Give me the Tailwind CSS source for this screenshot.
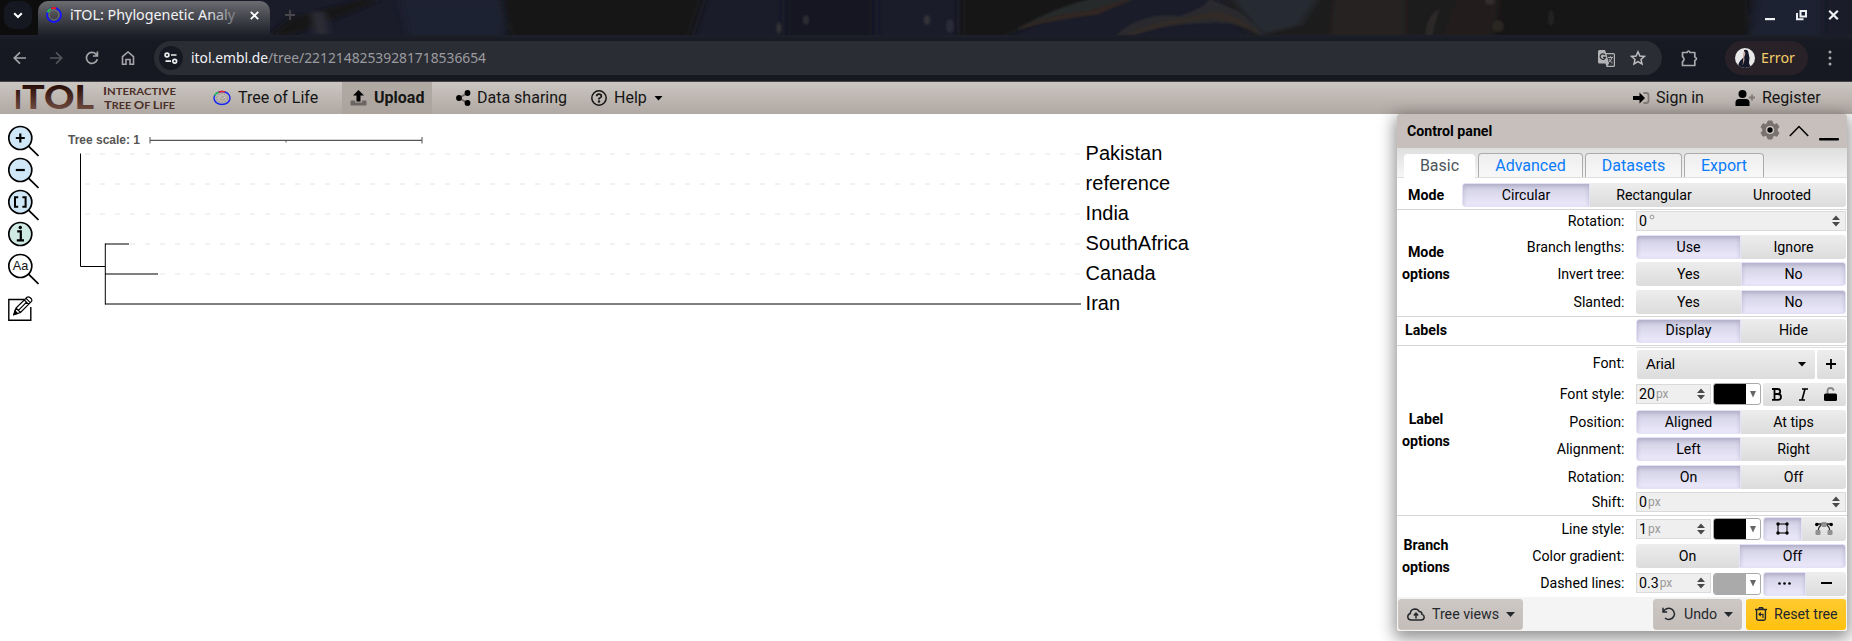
<!DOCTYPE html>
<html lang="en">
<head>
<meta charset="utf-8">
<title>iTOL: Phylogenetic Analysis</title>
<script src="https://cdn.jsdelivr.net/npm/@tailwindcss/browser@4"></script>
</head>
<body class="w-[1852px] h-[641px] overflow-hidden bg-white flex flex-col font-['Roboto',sans-serif] text-black">

<!-- Tab strip -->
<header class="relative h-[35px] w-full shrink-0 bg-[#17171d] overflow-hidden">
  <svg class="absolute inset-0" width="1852" height="35" viewBox="0 0 1852 35">
    <defs><filter id="soft" x="-10%" y="-50%" width="120%" height="200%"><feGaussianBlur stdDeviation="4 1.5"/></filter><filter id="soft2"><feGaussianBlur stdDeviation=".8"/></filter></defs>
    <rect width="1852" height="35" fill="#1b1c2a"/>
    <g filter="url(#soft)">
      <rect x="-20" y="-10" width="75" height="60" fill="#0d0d0e"/>
      <path d="M270 35 290 18 360 0 380 0 345 15 290 35Z" fill="#121217"/>
      <path d="M400 0h110l-10 40h-90z" fill="#1e2030"/>
      <path d="M500-5H705L690 40H510Z" fill="#121313"/>
      <path d="M785-5h90v45h-90z" fill="#181624"/>
      <path d="M960-5H1110L1020 30 1000 40H960Z" fill="#141518"/>
      <path d="M1310-5H1640V40H1255L1220 0Z" fill="#1c1b1b"/>
      <path d="M1335-5h70v45h-75z" fill="#252120"/>
      <path d="M1460-5h45l-15 45h-50z" fill="#241e1d"/>
      <path d="M1500-5h250v45h-255z" fill="#131314"/>
      <path d="M1760-5h60v45h-72z" fill="#1f2432"/>
      <path d="M1230-5h90l-20 30-40 10z" fill="#282b30"/>
      <path d="M312 12h12l4 22h-12z" fill="#2d2d38"/>
    </g>
    <g filter="url(#soft2)">
      <path d="M1018 28Q1060 5 1095-2H1135Q1090 17 1060 20Q1035 25 1018 30Z" fill="#28292c"/>
      <path d="M1022 26Q1060 13 1088 11L1128-1H1134L1096 15Q1050 19 1022 29Z" fill="#302820"/>
      <path d="M1115 36Q1140 12 1180 16Q1205 8 1210-1L1240 12Q1250 20 1265 36Q1235 20 1208 23Q1160 24 1132 36Z" fill="#2b2c2f"/>
      <path d="M1125 36Q1150 22 1185 18L1215 11Q1240 15 1262 36Q1235 22 1212 18Q1160 26 1132 36Z" fill="#302a28"/>
      <path d="M1425 36q2-22 15-28q-5 14-8 28z" fill="#302d2d" opacity=".8"/>
      <ellipse cx="806" cy="20" rx="3" ry="5" fill="#2c2d33"/>
      <ellipse cx="779" cy="28" rx="2.5" ry="6" fill="#303036"/>
      <ellipse cx="927" cy="20" rx="3.500" ry="5" fill="#303138"/>
      <ellipse cx="950" cy="26" rx="4" ry="7" fill="#292a38"/>
      <ellipse cx="1551" cy="18" rx="3" ry="8" fill="#222324"/>
      <ellipse cx="1490" cy="1" rx="5" ry="4" fill="#312e2d"/>
      <ellipse cx="1498" cy="26" rx="6" ry="6" fill="#2a2524"/>
    </g>
  </svg>
  <div class="absolute left-[4px] top-[1px] w-7 h-7 rounded-[10px] bg-[#151821] flex items-center justify-center">
    <svg width="10" height="7" viewBox="0 0 10 7" fill="none" stroke="#fff" stroke-width="2"><path d="M1.200 1.200 5 5 8.800 1.200"/></svg>
  </div>
  <div class="absolute left-[38px] top-[1px] w-[232px] h-[34px] rounded-t-[10px] bg-linear-to-b from-[#6c6d71] to-[#1e2029]"></div>
  <div class="absolute left-[46px] top-0 w-[224px] h-[30px] flex items-center">
    <svg width="16" height="16" viewBox="0 0 16 16" fill="none" stroke-width="1.800">
      <circle cx="8" cy="8" r="7" stroke="#1515ff"/>
      <path d="M5 1.700A7 7 0 0 1 10 1.300" stroke="#f01818"/><path d="M1.600 5.300A7 7 0 0 1 5 1.700" stroke="#1fd838"/>
      <circle cx="8" cy="8" r="5" stroke="#77787b" stroke-width="1"/>
    </svg>
    <svg class="ml-2 overflow-visible" width="166" height="22"><defs><linearGradient id="fade" gradientUnits="userSpaceOnUse" x1="0" y1="0" x2="170" y2="0"><stop offset=".8" stop-color="#f3f3f5"/><stop offset="1" stop-color="#f3f3f5" stop-opacity=".15"/></linearGradient></defs><text x="0" y="16" fill="url(#fade)" font-family="Noto Sans" font-size="14.500" textLength="165" lengthAdjust="spacingAndGlyphs">iTOL: Phylogenetic Analy</text></svg>
    <svg class="ml-[14px]" width="9" height="9" viewBox="0 0 9 9" stroke="#fff" stroke-width="1.800"><path d="M.8.8 8.200 8.200M8.200.8.800 8.200"/></svg>
  </div>
  <svg class="absolute left-[285px] top-[10px]" width="10" height="10" stroke="#47474c" stroke-width="1.800"><path d="M5 0V10M0 5H10"/></svg>
  <div class="absolute right-[13px] top-[9px] flex items-center gap-[21px]">
    <svg width="11" height="12"><rect x="1" y="9" width="10" height="2.200" fill="#eff0f3"/></svg>
    <svg width="11" height="12" fill="none" stroke="#eff0f3" stroke-width="2"><path d="M4.500 2H10V7.500H4.500ZM1 4V10.200H7.500"/></svg>
    <svg width="11" height="12" stroke="#eff0f3" stroke-width="2.200"><path d="M1.200 1.700 9.800 10.300M9.800 1.700 1.200 10.300"/></svg>
  </div>
</header>

<!-- Browser toolbar -->
<div class="h-[46px] shrink-0 w-full bg-linear-to-b from-[#1d1f29] to-[#161822] to-15% flex items-center">
  <div class="flex items-center ml-[13px] gap-[22px] w-[141px]">
    <svg width="14" height="14" viewBox="0 0 14 14" fill="none" stroke="#a5a5a9" stroke-width="1.700"><path d="M13 7H1.500M7 1.300 1.300 7 7 12.700"/></svg>
    <svg width="14" height="14" viewBox="0 0 14 14" fill="none" stroke="#54555c" stroke-width="1.700"><path d="M1 7H12.500M7 1.300 12.700 7 7 12.700"/></svg>
    <svg width="14" height="14" viewBox="0 0 14 14" fill="none" stroke="#a5a5a9" stroke-width="1.700"><path d="M12.300 8.200A5.500 5.500 0 1 1 10.900 3.100L12.300 4.600M12.400.5V5H7.900"/></svg>
    <svg width="14" height="14" viewBox="0 0 14 14" fill="none" stroke="#a5a5a9" stroke-width="1.600"><path d="M1.500 5.600 7 1 12.500 5.600V13.200H9V8.500H5V13.200H1.500Z"/></svg>
  </div>
  <div class="w-[1508px] h-[34px] rounded-full bg-[#2b2d34] flex items-center">
    <div class="ml-[5px] w-6 h-6 rounded-full bg-[#161822] flex items-center justify-center">
      <svg width="14" height="12" viewBox="0 0 14 12" fill="none" stroke="#eee" stroke-width="1.700"><circle cx="3" cy="3" r="1.900"/><path d="M7 3H12.500M1.500 9.200H7"/><circle cx="10.700" cy="9.200" r="1.900"/></svg>
    </div>
    <svg class="ml-2 overflow-visible" width="320" height="24"><text x="0" y="17" fill="#9b9ca0" font-family="Noto Sans" font-size="14.500" textLength="295" lengthAdjust="spacingAndGlyphs"><tspan fill="#f2f2f4">itol.embl.de</tspan>/tree/22121482539281718536654</text></svg>
    <div class="ml-auto mr-[16px] flex items-center gap-[15px]">
      <svg width="17" height="17" viewBox="0 0 17 17"><path d="M1.500 0H7L8 3H15.500A1.500 1.500 0 0 1 17 4.500V15.500A1.500 1.500 0 0 1 15.500 17H8.500L7.500 13.500H1.500A1.500 1.500 0 0 1 0 12V1.500A1.500 1.500 0 0 1 1.500 0Z" fill="#b3b3b6"/><path d="M8.500 4.200H15.800V15.800H9.500L11 13.500Z" fill="#33353b"/><path d="M10 7.500H15M12.500 6.300V7.500M14 7.500Q13 11 10.500 12.500M11 9Q12.500 12 14.500 13" fill="none" stroke="#b3b3b6" stroke-width="1"/><path d="M7 5A2.700 2.700 0 1 0 7.500 7.300H5" fill="none" stroke="#2b2d34" stroke-width="1.200"/></svg>
      <svg width="16" height="16" viewBox="0 0 16 16" fill="none" stroke="#bdbdc0" stroke-width="1.500"><path d="M8 1.800 9.900 6 14.400 6.400 11 9.400 12 13.900 8 11.500 4 13.900 5 9.400 1.600 6.400 6.100 6Z"/></svg>
    </div>
  </div>
  <svg class="ml-[19px]" width="17" height="17" viewBox="0 0 17 17" fill="none" stroke="#aaaaae" stroke-width="1.700"><path d="M1.500 2.500H6Q7.500-.5 9 2.500H13.800V7Q17.200 8.700 13.800 10.400V15.500H1.500V11.800Q4.500 9.200 1.500 6.500Z" stroke-linejoin="round"/></svg>
  <div class="ml-[27px] w-[83px] h-[34px] rounded-full bg-[#282228] flex items-center">
    <svg class="ml-[10px]" width="20" height="20" viewBox="0 0 20 20"><defs><clipPath id="av"><circle cx="10" cy="10" r="10"/></clipPath></defs><g clip-path="url(#av)"><rect width="20" height="20" fill="#e9e8e8"/><path d="M9 2Q13 .5 13.500 5L14.500 10 14 15 16 20H3Q3 14 7 11L9.500 8Z" fill="#141829"/><path d="M8.700 3.500Q10.500 3 10.300 6L9.200 8.500 9.500 12 7.500 18 8.300 11 8 7Z" fill="#c9a79c"/></g></svg>
    <svg class="ml-[6px] overflow-visible" width="36" height="24"><text x="0" y="17" fill="#f3cd69" font-family="Noto Sans" font-size="14" textLength="34" lengthAdjust="spacingAndGlyphs">Error</text></svg>
  </div>
  <svg class="ml-[20px]" width="4" height="16" fill="#a9a9ad"><circle cx="2" cy="2" r="1.500"/><circle cx="2" cy="8" r="1.500"/><circle cx="2" cy="14" r="1.500"/></svg>
</div>

<!-- Site navigation -->
<nav class="h-[33px] shrink-0 w-full border-t border-[#454347] bg-linear-to-b from-[#cbc6c2] to-[#b0a8a2] flex items-center text-[16px] text-[#151515]">
  <svg class="ml-[14px] overflow-visible" width="164" height="32" viewBox="0 0 164 32">
    <defs><linearGradient id="lg" gradientUnits="userSpaceOnUse" x1="0" y1="4" x2="0" y2="28"><stop offset="0" stop-color="#2b0f0a"/><stop offset="1" stop-color="#704c40"/></linearGradient></defs>
    <g fill="url(#lg)" font-family="Lato" font-weight="900">
      <text x="0" y="26.500" font-size="26" textLength="8" lengthAdjust="spacingAndGlyphs">I</text>
      <text x="8" y="26.500" font-size="31.500" textLength="72" lengthAdjust="spacingAndGlyphs">TOL</text>
    </g>
    <g fill="#4b2f28" font-family="Lato" font-weight="700">
      <text x="89" y="13" font-size="10.500" textLength="73" lengthAdjust="spacingAndGlyphs">I<tspan font-size="8.800">NTERACTIVE</tspan></text>
      <text x="90" y="27" font-size="10.500" textLength="71" lengthAdjust="spacingAndGlyphs">T<tspan font-size="8.800">REE </tspan>O<tspan font-size="8.800">F </tspan>L<tspan font-size="8.800">IFE</tspan></text>
    </g>
  </svg>
  <svg class="ml-[35px]" width="18" height="16" viewBox="0 0 18 16" fill="none" stroke-width="1.500">
    <ellipse cx="9" cy="8" rx="8" ry="6.500" stroke="#1a28f0"/><path d="M5.500 2.100A8 6.500 0 0 1 12 1.900" stroke="#f02020"/><path d="M1.500 5.500A8 6.500 0 0 1 5.500 2.100" stroke="#22d83a"/>
    <ellipse cx="9" cy="8" rx="5.300" ry="4.300" stroke="#98928e" stroke-width="1" stroke-dasharray="2 1"/><path d="M7 9Q9 11 12 9M8 7H11" stroke="#98928e" stroke-width=".8"/>
  </svg>
  <span class="ml-[7px] w-[80px] whitespace-nowrap">Tree of Life</span>
  <div class="ml-[24px] w-[90px] h-full bg-linear-to-b from-[#b1aaa4] to-[#aba39c] flex items-center">
    <svg class="ml-2" width="17" height="16" viewBox="0 0 17 16"><path d="M1.500 10.500H5V12.500H12V10.500H15.500Q16.500 10.500 16.500 11.500V14.500Q16.500 15.500 15.500 15.500H1.500Q.5 15.500.5 14.500V11.500Q.5 10.500 1.500 10.500Z" fill="#6b6562"/><path d="M8.500 0 14 5.500H10.500V11.500H6.500V5.500H3Z"/></svg>
    <span class="ml-[7px] font-bold">Upload</span>
  </div>
  <svg class="ml-[24px]" width="15" height="16" viewBox="0 0 15 16"><path d="M11.500 3 3 8 11.500 13" fill="none" stroke="#6b6562" stroke-width="1.600"/><circle cx="11.500" cy="3" r="2.900"/><circle cx="3" cy="8" r="2.900"/><circle cx="11.500" cy="13" r="2.900"/></svg>
  <span class="ml-[6px] w-[90px] whitespace-nowrap">Data sharing</span>
  <svg class="ml-[24px]" width="16" height="16" viewBox="0 0 16 16" fill="none" stroke="#151515" stroke-width="1.500"><circle cx="8" cy="8" r="7.200"/><path d="M5.700 6.200Q5.700 4.200 8 4.200T10.400 6.200Q10.400 7.300 8 8.400V9.500" stroke-width="1.700"/><circle cx="8" cy="11.500" r=".5"/></svg>
  <span class="ml-[7px] w-[33px]">Help</span>
  <svg class="ml-[7px]" width="9" height="5"><path d="M.5 0H8.500L4.500 4.500Z"/></svg>
  <div class="ml-auto mr-[30px] flex items-center">
    <svg width="17" height="16" viewBox="0 0 17 16"><path d="M10.500 3H13Q15.500 3 15.500 5V11Q15.500 13 13 13H10.500" fill="none" stroke="#807a76" stroke-width="1.800"/><path d="M6.500 2.500 12 8 6.500 13.500V10H0V6H6.500Z"/></svg>
    <span class="ml-[6px] w-[49px] whitespace-nowrap">Sign in</span>
    <svg class="ml-[30px]" width="21" height="16" viewBox="0 0 21 16"><circle cx="7.500" cy="4" r="4"/><path d="M.5 16V12.500Q.5 9 4 9H11Q14.500 9 14.500 12.500V16Z"/><path d="M17 4.500V10.500M14 7.500H20" stroke="#807a76" stroke-width="1.800"/></svg>
    <span class="ml-[6px] w-[60px]">Register</span>
  </div>
</nav>

<!-- Workspace -->
<main class="relative h-[527px] w-full flex">
  <svg class="absolute left-0 top-0" width="1397" height="527" viewBox="0 114 1397 527">
    <g stroke="#555" stroke-width="1" fill="none"><path d="M150 140.300H422" stroke-width="1.200"/><path d="M150 137V143.500M422 137V143.500M286 140V142.500"/></g>
    <text x="68" y="144" font-family="Liberation Sans" font-weight="700" font-size="12" fill="#555" textLength="72">Tree scale: 1</text>
    <g stroke="#e4e4e4" stroke-width="1" stroke-dasharray="5 10"><path d="M85 154H1080M85 184H1080M85 214H1080M130 244H1080M160 274H1080"/></g>
    <g stroke="#000" stroke-width="1" fill="none"><path d="M80.500 153.500V266.500H105"/><path d="M105.300 243.500V304.500"/><path d="M105 244H129M105 274H158M105 304H1081"/></g>
    <g font-family="Liberation Sans" font-size="20" fill="#000">
      <text x="1085.600" y="160">Pakistan</text><text x="1085.600" y="190">reference</text><text x="1085.600" y="220">India</text>
      <text x="1085.600" y="250">SouthAfrica</text><text x="1085.600" y="280">Canada</text><text x="1085.600" y="310">Iran</text>
    </g>
  </svg>

  <aside class="ml-[7px] mt-[11px] flex flex-col w-8">
    <svg width="32" height="32" viewBox="0 0 32 32" fill="none" stroke="#000" stroke-width="1.700"><circle cx="13.300" cy="13" r="11.500" fill="#d0e7f8"/><path d="M21.500 21.200 31.500 31"/><path d="M13.300 8.500V17.500M8.800 13H17.800" stroke-width="2.200"/></svg>
    <svg width="32" height="32" viewBox="0 0 32 32" fill="none" stroke="#000" stroke-width="1.700"><circle cx="13.300" cy="13" r="11.500" fill="#d0e7f8"/><path d="M21.500 21.200 31.500 31"/><path d="M8.800 13H17.800" stroke-width="2.200"/></svg>
    <svg width="32" height="32" viewBox="0 0 32 32" fill="none" stroke="#000" stroke-width="1.700"><circle cx="13.300" cy="13" r="11.500" fill="#d0e7f8"/><path d="M21.500 21.200 31.500 31"/><path d="M11.200 8.300H8V17.700H11.200M15.400 8.300H18.600V17.700H15.400" stroke-width="2"/></svg>
    <svg width="32" height="32" viewBox="0 0 32 32" fill="none" stroke="#000" stroke-width="1.700"><circle cx="13.300" cy="13" r="11.500" fill="#cfe9e3"/><path d="M10.200 10.300H13.800V19M9.800 19.300H17" stroke-width="2.200"/><circle cx="13.300" cy="6.500" r="1.700" fill="#000" stroke="none"/></svg>
    <svg width="32" height="32" viewBox="0 0 32 32" fill="none" stroke="#000" stroke-width="1.700"><circle cx="13.300" cy="13" r="11.500" fill="#fff"/><path d="M21.500 21.200 31.500 31"/><text x="5.800" y="17" font-family="Liberation Sans" font-size="13" fill="#111" stroke="none" textLength="15.500" lengthAdjust="spacingAndGlyphs">Aa</text></svg>
    <svg class="mt-[10px]" width="32" height="28" viewBox="0 0 32 28" fill="none" stroke="#000" stroke-width="1.400"><path d="M17 4.500H1.800V25.300H23.800V12"/><path d="M7 19.500 9 13 20 2.300Q21.300 1.300 23 2.500L24.500 4Q25.500 5.500 24.300 6.700L13.500 17.500ZM9 13 13.500 17.500M17.300 5 21.600 9.300M19 3.300 23.300 7.600M11.500 15.300 19.500 7.200" stroke-width="1.200"/><path d="M7 19.500 8 16 10.300 18.500Z" fill="#000"/></svg>
  </aside>

  <!-- Control panel -->
  <section class="ml-auto mr-[5px] w-[450px] h-[517px] bg-white rounded-[3px] shadow-[0_5px_16px_3px_rgba(0,0,0,0.42)] relative flex flex-col leading-[18px]">
    <div class="h-[34px] shrink-0 bg-[#c6bfbc] rounded-t-[3px] flex items-center pl-[10px] pr-[8px] font-bold text-[14.200px]">
      Control panel
      <svg class="ml-auto -mt-[2px]" width="20" height="20" viewBox="0 0 20 20"><path d="M8 1H12L12.700 3.500 14.500 4.500 17 3.800 19 7.200 17.200 9V11L19 12.800 17 16.200 14.500 15.500 12.700 16.500 12 19H8L7.300 16.500 5.500 15.500 3 16.200 1 12.800 2.800 11V9L1 7.200 3 3.800 5.500 4.500 7.300 3.500Z" fill="#79736f" stroke="#79736f" stroke-linejoin="round"/><circle cx="10" cy="10" r="4" fill="#d3cdc9"/><circle cx="10" cy="10" r="2.700"/></svg>
      <svg class="ml-[9px]" width="20" height="12" fill="none" stroke="#000" stroke-width="1.500"><path d="M.8 11 10 1.500 19.200 11"/></svg>
      <svg class="ml-[10px] mt-[17px]" width="20" height="3"><rect width="20" height="2.500" rx="1"/></svg>
    </div>
    <div class="h-[30px] shrink-0 bg-linear-to-b from-[#dedede] to-[#f7f7f7] border-b border-[#dedede] flex items-end pl-[7px] text-[16px] text-[#0a7cfa]">
      <div class="w-[71px] h-[24px] -mb-px bg-white rounded-t text-[#4c545b] flex items-center justify-center">Basic</div>
      <div class="ml-[3px] w-[105px] h-[24px] bg-linear-to-b from-[#eeeeee] to-[#f8f8f8] border border-b-0 border-[#ababab] rounded-t flex items-center justify-center">Advanced</div>
      <div class="ml-[2px] w-[97px] h-[24px] bg-linear-to-b from-[#eeeeee] to-[#f8f8f8] border border-b-0 border-[#ababab] rounded-t flex items-center justify-center">Datasets</div>
      <div class="ml-[2px] w-[80px] h-[24px] bg-linear-to-b from-[#eeeeee] to-[#f8f8f8] border border-b-0 border-[#ababab] rounded-t flex items-center justify-center">Export</div>
    </div>

    <div class="h-[32px] shrink-0 border-b border-[#d6d6d6] flex items-center pt-[2px] text-[14.200px]">
      <b class="w-[65px] pl-[11px]">Mode</b>
      <div class="w-[384px] h-[24px] flex">
        <div class="w-[128px] rounded-l-[3px] border border-[#e4e2f6] bg-linear-to-b from-[#cfcde1] to-[#eceafb] shadow-[inset_0_2px_4px_rgba(70,65,110,0.25)] flex items-center justify-center">Circular</div>
        <div class="w-[128px] bg-linear-to-b from-[#ededed] to-[#dcdcdc] flex items-center justify-center">Rectangular</div>
        <div class="w-[128px] rounded-r-[3px] bg-linear-to-b from-[#ededed] to-[#dcdcdc] flex items-center justify-center">Unrooted</div>
      </div>
    </div>

    <div class="h-[107px] shrink-0 border-b border-[#d6d6d6] flex text-[14.200px]">
      <b class="w-[58px] pt-[32px] text-center leading-[21.500px]">Mode options</b>
      <div class="w-[391px] flex flex-col pt-px">
        <div class="h-[20px] flex items-center"><span class="w-[169.500px] text-right">Rotation:</span>
          <div class="ml-auto w-[210px] h-[20px] border border-[#dadada] bg-[#efefef] flex items-center pl-[2px] pr-[5px]">0<svg class="ml-[2px] -mt-[9px]" width="6" height="6" fill="none" stroke="#999"><circle cx="3" cy="3" r="1.900"/></svg><svg class="ml-auto" width="8" height="12" fill="#4a4a4a"><path d="M0 5 4 .5 8 5ZM0 7H8L4 11.500Z"/></svg></div></div>
        <div class="mt-[4px] h-[24px] flex items-center"><span class="w-[169.500px] text-right">Branch lengths:</span>
          <div class="ml-auto w-[210px] h-full flex"><div class="w-[105px] rounded-l-[3px] border border-[#e4e2f6] bg-linear-to-b from-[#cfcde1] to-[#eceafb] shadow-[inset_0_2px_4px_rgba(70,65,110,0.25)] flex items-center justify-center">Use</div><div class="w-[105px] rounded-r-[3px] bg-linear-to-b from-[#ededed] to-[#dcdcdc] flex items-center justify-center">Ignore</div></div></div>
        <div class="mt-[3px] h-[24px] flex items-center"><span class="w-[169.500px] text-right">Invert tree:</span>
          <div class="ml-auto w-[210px] h-full flex"><div class="w-[105px] rounded-l-[3px] bg-linear-to-b from-[#ededed] to-[#dcdcdc] flex items-center justify-center">Yes</div><div class="w-[105px] rounded-r-[3px] border border-[#e4e2f6] bg-linear-to-b from-[#cfcde1] to-[#eceafb] shadow-[inset_0_2px_4px_rgba(70,65,110,0.25)] flex items-center justify-center">No</div></div></div>
        <div class="mt-[4px] h-[24px] flex items-center"><span class="w-[169.500px] text-right">Slanted:</span>
          <div class="ml-auto w-[210px] h-full flex"><div class="w-[105px] rounded-l-[3px] bg-linear-to-b from-[#ededed] to-[#dcdcdc] flex items-center justify-center">Yes</div><div class="w-[105px] rounded-r-[3px] border border-[#e4e2f6] bg-linear-to-b from-[#cfcde1] to-[#eceafb] shadow-[inset_0_2px_4px_rgba(70,65,110,0.25)] flex items-center justify-center">No</div></div></div>
      </div>
    </div>

    <div class="h-[29px] shrink-0 border-b border-[#d6d6d6] flex items-center text-[14.200px] pr-px">
      <b class="pl-[8px] -mt-[2px]">Labels</b>
      <div class="ml-auto w-[210px] h-[24px] flex -mt-px"><div class="w-[105px] pb-px rounded-l-[3px] border border-[#e4e2f6] bg-linear-to-b from-[#cfcde1] to-[#eceafb] shadow-[inset_0_2px_4px_rgba(70,65,110,0.25)] flex items-center justify-center">Display</div><div class="w-[105px] pb-px rounded-r-[3px] bg-linear-to-b from-[#ededed] to-[#dcdcdc] flex items-center justify-center">Hide</div></div>
    </div>

    <div class="h-[170px] shrink-0 border-b border-[#d6d6d6] flex text-[14.200px]">
      <b class="w-[58px] pt-[63px] text-center leading-[21.500px]">Label options</b>
      <div class="w-[391px] flex flex-col">
        <div class="mt-px ml-auto w-[210px] border-t border-[#dcdcdc]"></div>
        <div class="mt-[2px] h-[29px] flex items-center"><span class="w-[169.500px] text-right -mt-[3px]">Font:</span>
          <div class="ml-auto w-[209px] h-full flex gap-[2px]"><div class="w-[178px] rounded-[2px] bg-linear-to-b from-[#ededed] to-[#dcdcdc] flex items-center px-[9px] pb-px font-['Liberation_Sans'] text-[14.500px]">Arial<svg class="ml-auto" width="8" height="5"><path d="M0 0H8L4 4.500Z"/></svg></div><div class="w-[28px] rounded-[2px] bg-linear-to-b from-[#ededed] to-[#dcdcdc] flex items-center justify-center pb-[2px]"><svg width="10" height="10" stroke="#000" stroke-width="1.800"><path d="M5 0V10M0 5H10"/></svg></div></div></div>
        <div class="mt-[4px] h-[24px] flex items-center"><span class="w-[169.500px] text-right -mt-[3px]">Font style:</span>
          <div class="ml-auto w-[210px] h-full flex items-center">
            <div class="-mt-[3px] w-[75px] h-[20px] border border-[#dadada] bg-[#efefef] flex items-center pl-[2px] pr-[5px]">20<span class="text-[12px] text-[#999] ml-[1px]">px</span><svg class="ml-auto" width="8" height="12" fill="#4a4a4a"><path d="M0 5 4 .5 8 5ZM0 7H8L4 11.500Z"/></svg></div>
            <div class="-mt-[2px] ml-[2px] w-[48px] h-[22px] border border-[#aaa] rounded-[3px] bg-white flex overflow-hidden"><div class="w-[32px] bg-black"></div><svg class="m-auto" width="6" height="7" fill="#666"><path d="M0 0H6L3 6.500Z"/></svg></div>
            <div class="-mt-px ml-[2px] w-[83px] h-[23px] rounded-[2px] bg-linear-to-b from-[#ededed] to-[#dcdcdc] flex items-center justify-between pl-[9px] pr-[9px] pb-px">
              <svg width="10" height="13" viewBox="0 0 10 13" fill="none" stroke="#000" stroke-width="1.800"><path d="M0 1H5.500Q8.200 1 8.200 3.500T5.500 6H2.500M2.500 1V11.800M0 11.800H6Q9 11.800 9 9T6 6"/></svg>
              <svg width="9" height="13" viewBox="0 0 9 13" fill="none" stroke="#000" stroke-width="1.600"><path d="M3 1H9M0 12H6M6 1 3 12"/></svg>
              <svg width="13" height="14" viewBox="0 0 13 14"><path d="M3.500 7V3.800Q3.500 1 6.500 1T9.500 3.800" fill="none" stroke="#888" stroke-width="1.800"/><rect y="6.500" width="13" height="7.500" rx="1.500"/></svg>
            </div></div></div>
        <div class="mt-[3px] h-[24px] flex items-center"><span class="w-[169.500px] text-right">Position:</span>
          <div class="ml-auto w-[210px] h-full flex"><div class="w-[105px] rounded-l-[3px] border border-[#e4e2f6] bg-linear-to-b from-[#cfcde1] to-[#eceafb] shadow-[inset_0_2px_4px_rgba(70,65,110,0.25)] flex items-center justify-center">Aligned</div><div class="w-[105px] rounded-r-[3px] bg-linear-to-b from-[#ededed] to-[#dcdcdc] flex items-center justify-center">At tips</div></div></div>
        <div class="mt-[3px] h-[24px] flex items-center"><span class="w-[169.500px] text-right">Alignment:</span>
          <div class="ml-auto w-[210px] h-full flex"><div class="w-[105px] rounded-l-[3px] border border-[#e4e2f6] bg-linear-to-b from-[#cfcde1] to-[#eceafb] shadow-[inset_0_2px_4px_rgba(70,65,110,0.25)] flex items-center justify-center">Left</div><div class="w-[105px] rounded-r-[3px] bg-linear-to-b from-[#ededed] to-[#dcdcdc] flex items-center justify-center">Right</div></div></div>
        <div class="mt-[4px] h-[24px] flex items-center"><span class="w-[169.500px] text-right">Rotation:</span>
          <div class="ml-auto w-[210px] h-full flex"><div class="w-[105px] rounded-l-[3px] border border-[#e4e2f6] bg-linear-to-b from-[#cfcde1] to-[#eceafb] shadow-[inset_0_2px_4px_rgba(70,65,110,0.25)] flex items-center justify-center">On</div><div class="w-[105px] rounded-r-[3px] bg-linear-to-b from-[#ededed] to-[#dcdcdc] flex items-center justify-center">Off</div></div></div>
        <div class="mt-[3px] h-[20px] flex items-center"><span class="w-[169.500px] text-right">Shift:</span>
          <div class="ml-auto w-[210px] h-[20px] border border-[#dadada] bg-[#efefef] flex items-center pl-[2px] pr-[5px]">0<span class="text-[12px] text-[#999] ml-[1px]">px</span><svg class="ml-auto" width="8" height="12" fill="#4a4a4a"><path d="M0 5 4 .5 8 5ZM0 7H8L4 11.500Z"/></svg></div></div>
      </div>
    </div>

    <div class="h-[81px] shrink-0 flex text-[14.200px]">
      <b class="w-[58px] pt-[18px] text-center leading-[22px]">Branch options</b>
      <div class="w-[391px] flex flex-col">
        <div class="mt-px h-[24px] flex items-center"><span class="w-[169.500px] text-right -mt-px">Line style:</span>
          <div class="ml-auto w-[210px] h-full flex items-center">
            <div class="-mt-px w-[75px] h-[20px] border border-[#dadada] bg-[#efefef] flex items-center pl-[2px] pr-[5px]">1<span class="text-[12px] text-[#999] ml-[1px]">px</span><svg class="ml-auto" width="8" height="12" fill="#4a4a4a"><path d="M0 5 4 .5 8 5ZM0 7H8L4 11.500Z"/></svg></div>
            <div class="ml-[2px] w-[48px] h-[22px] border border-[#aaa] rounded-[3px] bg-white flex overflow-hidden"><div class="w-[32px] bg-black"></div><svg class="m-auto" width="6" height="7" fill="#666"><path d="M0 0H6L3 6.500Z"/></svg></div>
            <div class="ml-[2px] w-[83px] h-full flex">
              <div class="w-[39px] pb-px rounded-l-[3px] border border-[#e4e2f6] bg-linear-to-b from-[#cfcde1] to-[#eceafb] shadow-[inset_0_2px_4px_rgba(70,65,110,0.25)] flex items-center justify-center"><svg width="13" height="13" viewBox="0 0 13 13"><rect x="2" y="2" width="9" height="9" fill="none" stroke="#222" stroke-width="1.200"/><g><circle cx="2" cy="2" r="1.700"/><circle cx="11" cy="2" r="1.700"/><circle cx="2" cy="11" r="1.700"/><circle cx="11" cy="11" r="1.700"/></g></svg></div>
              <div class="w-[44px] pb-px rounded-r-[3px] bg-linear-to-b from-[#ededed] to-[#dcdcdc] flex items-center justify-center"><svg width="18" height="13" viewBox="0 0 18 13"><path d="M2 2H16M6 3Q3.500 5 3 9M12 3Q14.500 5 15 9" fill="none" stroke="#222" stroke-width="1.300"/><circle cx="1.800" cy="2.500" r="1.800"/><circle cx="16.200" cy="2.500" r="1.800"/><g fill="#909090"><rect x="6.500" y="0" width="5" height="5" rx="1"/><rect x=".5" y="8" width="5" height="5" rx="1"/><rect x="12.500" y="8" width="5" height="5" rx="1"/></g></svg></div>
            </div></div></div>
        <div class="mt-[3px] h-[24px] flex items-center"><span class="w-[169.500px] text-right">Color gradient:</span>
          <div class="ml-auto w-[210px] h-full flex"><div class="w-[103px] rounded-l-[3px] bg-linear-to-b from-[#ededed] to-[#dcdcdc] flex items-center justify-center">On</div><div class="w-[107px] rounded-r-[3px] border border-[#e4e2f6] bg-linear-to-b from-[#cfcde1] to-[#eceafb] shadow-[inset_0_2px_4px_rgba(70,65,110,0.25)] flex items-center justify-center">Off</div></div></div>
        <div class="mt-[4px] h-[24px] flex items-center"><span class="w-[169.500px] text-right -mt-[2px]">Dashed lines:</span>
          <div class="ml-auto w-[210px] h-full flex items-center">
            <div class="-mt-[3px] w-[75px] h-[20px] border border-[#dadada] bg-[#efefef] flex items-center pl-[2px] pr-[5px]">0.3<span class="text-[12px] text-[#999] ml-[1px]">px</span><svg class="ml-auto" width="8" height="12" fill="#4a4a4a"><path d="M0 5 4 .5 8 5ZM0 7H8L4 11.500Z"/></svg></div>
            <div class="-mt-px ml-[2px] w-[48px] h-[22px] border border-[#aaa] rounded-[3px] bg-white flex overflow-hidden"><div class="w-[32px] bg-[#aaa]"></div><svg class="m-auto" width="6" height="7" fill="#666"><path d="M0 0H6L3 6.500Z"/></svg></div>
            <div class="-mt-px ml-[2px] w-[83px] h-full flex">
              <div class="w-[43px] rounded-l-[3px] border border-[#e4e2f6] bg-linear-to-b from-[#cfcde1] to-[#eceafb] shadow-[inset_0_2px_4px_rgba(70,65,110,0.25)] flex items-center justify-center"><svg class="-mt-px" width="13" height="3"><circle cx="1.500" cy="1.500" r="1.300"/><circle cx="6.500" cy="1.500" r="1.300"/><circle cx="11.500" cy="1.500" r="1.300"/></svg></div>
              <div class="w-[40px] rounded-r-[3px] bg-linear-to-b from-[#ededed] to-[#dcdcdc] flex items-center justify-center"><svg class="-mt-px" width="11" height="2"><rect width="11" height="2"/></svg></div>
            </div></div></div>
      </div>
    </div>

    <div class="h-[34px] shrink-0 bg-[#f4f4f4] rounded-b-[3px] flex items-start px-px pt-[2px] text-[14.200px] text-[#24282c]">
      <div class="w-[125px] h-[31px] rounded-[3px] bg-linear-to-b from-[#cdc8c5] to-[#c4bdba] border border-[#cbc5c2] flex items-center pl-[8px] pb-px">
        <svg width="18" height="13" viewBox="0 0 18 13" fill="none" stroke="#24282c" stroke-width="1.500"><path d="M4.500 12Q.8 12 .8 8.800Q.8 6.300 3.300 5.500Q3.500 1 8 .9Q11 1 12.300 3.600Q15 3.800 15 6.400Q17.200 7.200 17.200 9.200Q17 12 14 12ZM9 10.500V5.500M6.800 7.500 9 5.200 11.200 7.500"/></svg>
        <span class="ml-[7px] whitespace-nowrap">Tree views</span>
        <svg class="ml-[7px]" width="9" height="5" fill="#24282c"><path d="M0 0H9L4.500 5Z"/></svg>
      </div>
      <div class="ml-auto w-[89px] h-[31px] rounded-[3px] bg-linear-to-b from-[#cdc8c5] to-[#c4bdba] border border-[#cbc5c2] flex items-center pl-[8px] pb-px">
        <svg width="14" height="14" viewBox="0 0 14 14" fill="none" stroke="#24282c" stroke-width="1.500"><path d="M1 .8V5H5.200M1.200 4.800Q3.500 1.200 7.300 1.300A5.600 5.600 0 1 1 3 11"/></svg>
        <span class="ml-[8px]">Undo</span>
        <svg class="ml-[7px]" width="9" height="5" fill="#24282c"><path d="M0 0H9L4.500 5Z"/></svg>
      </div>
      <div class="ml-[4px] w-[100px] h-[31px] rounded-[3px] bg-linear-to-b from-[#ffca2f] to-[#ffc10a] flex items-center pl-[9px] pb-px">
        <svg width="12" height="14" viewBox="0 0 12 14" fill="none" stroke="#24282c" stroke-width="1.400"><path d="M0 2.500H12M3.700 2.300 4.500.8H7.500L8.300 2.300M1.600 2.500V11.500Q1.600 13.200 3.200 13.200H8.800Q10.400 13.200 10.400 11.500V2.500"/><path d="M8 11V7.300H4.500M5.800 5.500 4 7.300 5.800 9.100" stroke-width="1.200"/></svg>
        <span class="ml-[7px] whitespace-nowrap">Reset tree</span>
      </div>
    </div>
  </section>
</main>
</body>
</html>
